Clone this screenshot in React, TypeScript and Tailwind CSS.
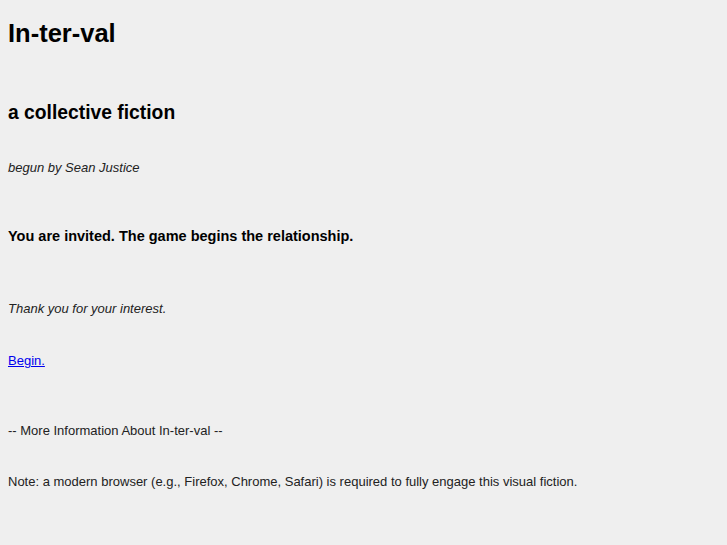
export default function App() {
    return (
        <div className="min-h-[545px] bg-[#efefef] px-2 pt-[18px] font-['Liberation_Sans',Arial,sans-serif] text-black">
            <h1 className="text-[25.5px] font-bold leading-[30px]">In-ter-val</h1>

            <h2 className="mt-[53px] text-[19.3px] font-bold leading-6">
                a collective fiction
            </h2>

            <p className="mt-[35px] text-[13px] italic leading-4 text-[#222]">
                begun by Sean Justice
            </p>

            <p className="mt-[50px] text-[14.5px] font-bold leading-5">
                You are invited. The game begins the relationship.
            </p>

            <p className="mt-[55px] text-[13px] italic leading-4 text-[#222]">
                Thank you for your interest.
            </p>

            <p className="mt-[36px] text-[13px] leading-4">
                <a href="#" className="text-[#0000ee] underline">
                    Begin.
                </a>
            </p>

            <p className="mt-[54px] text-[13px] leading-4 text-[#222]">
                -- More Information About In-ter-val --
            </p>

            <p className="mt-[35px] text-[13px] leading-4 text-[#222]">
                Note: a modern browser (e.g., Firefox, Chrome, Safari) is required to fully engage this visual fiction.
            </p>
        </div>
    );
}
